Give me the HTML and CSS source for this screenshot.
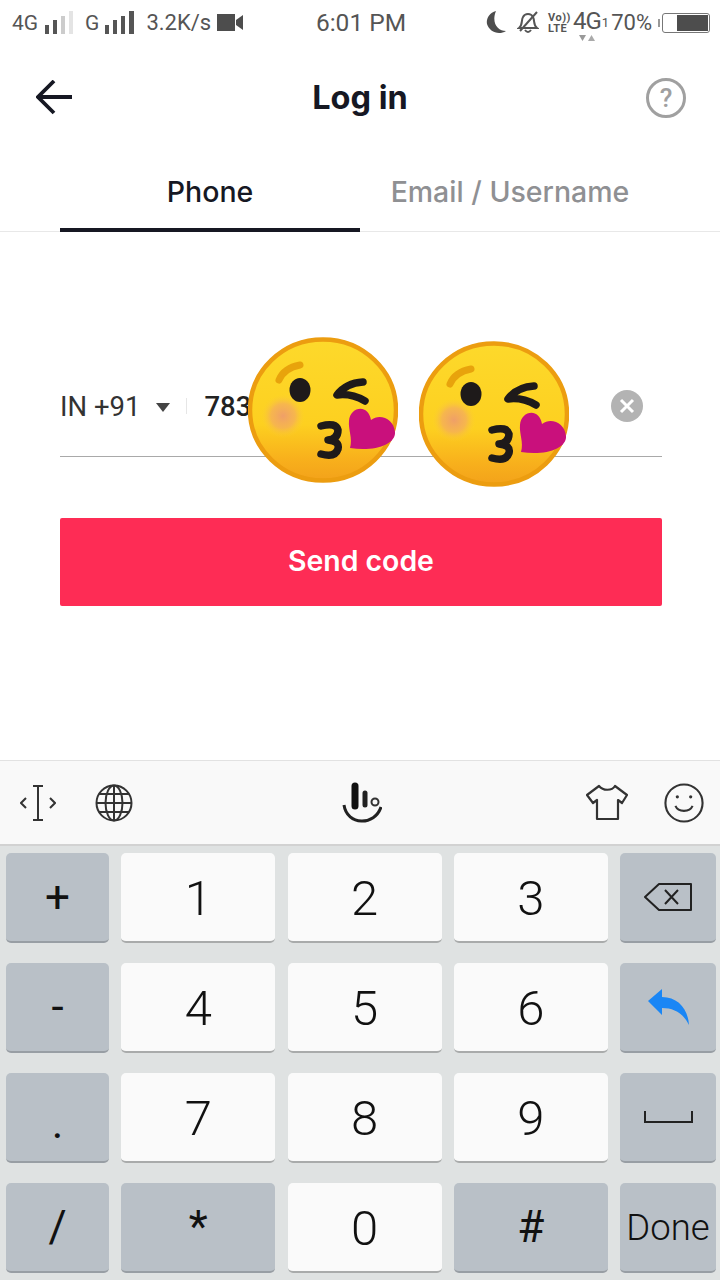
FILE: index.html
```html
<!DOCTYPE html>
<html lang="en">
<head>
    <meta charset="UTF-8">
    <meta name="viewport" content="width=device-width, initial-scale=1.0">
    <title>Log in</title>
    <link rel="stylesheet" href="styles.css">
</head>
<body>
<svg class="defs" width="0" height="0">
    <defs>
        <linearGradient id="faceFill" x1="0" y1="0" x2="0" y2="1">
            <stop offset="0" stop-color="#fdd92b"/>
            <stop offset="0.6" stop-color="#fdd020"/>
            <stop offset="0.85" stop-color="#f8b01c"/>
            <stop offset="1" stop-color="#f3a21a"/>
        </linearGradient>
        <radialGradient id="cheekFill">
            <stop offset="0" stop-color="#ef9f68"/>
            <stop offset="0.55" stop-color="#f4ad5c" stop-opacity="0.75"/>
            <stop offset="1" stop-color="#fbd02f" stop-opacity="0"/>
        </radialGradient>
        <symbol id="kiss" viewBox="0 0 150 146">
            <ellipse cx="75" cy="73" rx="73" ry="70.500" fill="url(#faceFill)" stroke="#ec9d10" stroke-width="4.500"/>
            <path d="M31 43Q36 31 52 28" fill="none" stroke="#e8a30c" stroke-width="7" stroke-linecap="round"/>
            <circle cx="35" cy="79" r="22" fill="url(#cheekFill)"/>
            <ellipse cx="52" cy="53" rx="10.500" ry="12" fill="#1e1a1a"/>
            <path d="M115 45Q98 46 89 58Q103 56 117 64" fill="none" stroke="#1e1a1a" stroke-width="7.500" stroke-linecap="round" stroke-linejoin="round"/>
            <path d="M73 89Q88 85 90 93Q90 102 80 103Q92 104 90 112Q87 121 73 117" fill="none" stroke="#1e1a1a" stroke-width="7.500" stroke-linecap="round" stroke-linejoin="round"/>
            <path d="M102 111C105 102 100 92 101 84C102 70 120 66 123 83C132 76 146 82 147 95C148 108 125 115 102 111Z" fill="#c9107c"/>
        </symbol>
    </defs>
</svg>

<div class="page">
    <div class="status-bar">
        <div class="status-left">
            <span class="s-4g">4G</span>
            <svg class="s-bars" width="28" height="24" viewBox="0 0 28 24"><rect x="0" y="14" width="4" height="9" fill="#555"/><rect x="8" y="9" width="4" height="14" fill="#555"/><rect x="16" y="5" width="4" height="18" fill="#ccc"/><rect x="24" y="0" width="4" height="23" fill="#e4e4e4"/></svg>
            <span class="s-g">G</span>
            <svg class="s-bars" width="29" height="24" viewBox="0 0 29 24"><rect x="0" y="14" width="4" height="9" fill="#555"/><rect x="8" y="9" width="4" height="14" fill="#555"/><rect x="16" y="5" width="4" height="18" fill="#555"/><rect x="24" y="0" width="5" height="23" fill="#555"/></svg>
            <span class="s-speed">3.2K/s</span>
            <svg width="27" height="18" viewBox="0 0 27 18"><rect x="0" y="0" width="18" height="17" fill="#4d4d4d"/><path d="M19 6L26 1V16L19 11Z" fill="#4d4d4d"/></svg>
        </div>
        <div class="status-time">6:01 PM</div>
        <div class="status-right">
            <svg class="s-moon" width="20" height="23" viewBox="0 0 20 23"><path d="M10 0C3 2 0 8 1 13C3 20 12 25 20 20C12 20 5 12 10 0Z" fill="#4d4d4d"/></svg>
            <svg class="s-bell" width="22" height="23" viewBox="0 0 22 23"><path d="M2 17C6 14 4 9 6 6C8 2 14 2 16 6C18 10 16 14 20 17Z M8 19Q11 23 14 19" fill="none" stroke="#555" stroke-width="2"/><path d="M3 20L20 1" stroke="#555" stroke-width="2"/></svg>
            <div class="s-volte"><span>Vo))</span><span>LTE</span></div>
            <div class="s-net">
                <span class="s-4g-big">4G</span>
                <svg width="16" height="7" viewBox="0 0 16 7"><path d="M0 1H7L3.500 7Z" fill="#999"/><path d="M9 7H16L12.500 1Z" fill="#aaa"/></svg>
            </div>
            <span class="s-sim">1</span>
            <span class="s-pct">70%</span>
            <div class="battery"><div class="battery-fill"></div></div>
        </div>
    </div>

    <header class="top-bar">
        <svg width="36" height="36" viewBox="0 0 36 36"><path d="M36 17H2M18 1L2 17L18 33" fill="none" stroke="#161823" stroke-width="3.800"/></svg>
        <h1 class="title">Log in</h1>
        <div class="help">?</div>
    </header>

    <nav class="tabs">
        <div class="tab tab-active">Phone</div>
        <div class="tab">Email / Username</div>
    </nav>

    <main class="form">
        <div class="phone-row">
            <span class="country">IN +91</span>
            <span class="caret"></span>
            <span class="divider"></span>
            <span class="number">783</span>
            <span class="clear">
                <svg width="16" height="16" viewBox="0 0 16 16"><path d="M2 2L14 14M14 2L2 14" stroke="#fff" stroke-width="3"/></svg>
            </span>
        </div>
        <button class="send-btn">Send code</button>
    </main>

    <svg class="emoji emoji-one" width="150" height="146"><use href="#kiss"/></svg>
    <svg class="emoji emoji-two" width="150" height="146"><use href="#kiss"/></svg>

    <section class="keyboard">
        <div class="kb-tools">
            <div class="kb-tools-left">
                <svg width="36" height="36" viewBox="0 0 36 36" fill="none" stroke="#333"><path d="M6 13L1 18L6 23M30 13L35 18L30 23" stroke-width="2"/><path d="M13 1H23M18 1V35M13 35H23" stroke-width="2"/></svg>
                <svg width="38" height="38" viewBox="0 0 38 38" fill="none" stroke="#333" stroke-width="2"><circle cx="19" cy="19" r="17.500"/><ellipse cx="19" cy="19" rx="8.500" ry="17.500"/><path d="M19 1.500V36.500M1.500 19H36.500M4 10H34M4 28H34"/></svg>
            </div>
            <svg width="40" height="41" viewBox="0 0 40 41" fill="none"><path d="M2 23C5 44 33 44 39 25" stroke="#222" stroke-width="3"/><path d="M13 4V24" stroke="#111" stroke-width="7" stroke-linecap="round"/><path d="M23 11V23" stroke="#222" stroke-width="5" stroke-linecap="round"/><circle cx="33" cy="20" r="3.500" stroke="#333" stroke-width="2"/></svg>
            <div class="kb-tools-right">
                <svg width="42" height="37" viewBox="0 0 42 37" fill="none" stroke="#333" stroke-width="2.200" stroke-linejoin="round"><path d="M13 2L1 11L7 19L11 16V35H32V16L36 19L41 11L29 2C26 7 17 7 13 2Z"/></svg>
                <svg width="40" height="40" viewBox="0 0 42 42" fill="none" stroke="#333" stroke-width="2.200"><circle cx="21" cy="21" r="19.500"/><path d="M12 24C15 31 27 31 30 24"/><circle cx="14" cy="14.500" r="1.700" fill="#333" stroke="none"/><circle cx="28" cy="14.500" r="1.700" fill="#333" stroke="none"/></svg>
            </div>
        </div>
        <div class="kb-keys">
            <div class="key key-fn key-sign">+</div>
            <div class="key">1</div>
            <div class="key">2</div>
            <div class="key">3</div>
            <div class="key key-fn">
                <svg width="48" height="28" viewBox="0 0 48 28" fill="none" stroke="#222" stroke-width="2"><path d="M15 1H47V27H15L1 14Z" stroke-linejoin="round"/><path d="M21 7L34 21M34 7L21 21"/></svg>
            </div>
            <div class="key key-fn key-sign">-</div>
            <div class="key">4</div>
            <div class="key">5</div>
            <div class="key">6</div>
            <div class="key key-fn">
                <svg width="41" height="36" viewBox="0 0 41 36"><path d="M0 12L14 0V8C30 8 40 20 41 36C35 24 26 19 14 19V26Z" fill="#1a86f5"/></svg>
            </div>
            <div class="key key-fn key-sign key-dot">.</div>
            <div class="key">7</div>
            <div class="key">8</div>
            <div class="key">9</div>
            <div class="key key-fn">
                <svg width="49" height="14" viewBox="0 0 49 14" fill="none" stroke="#222" stroke-width="2"><path d="M1 1V12H48V1"/></svg>
            </div>
            <div class="key key-fn key-sign">/</div>
            <div class="key key-fn key-sign">*</div>
            <div class="key">0</div>
            <div class="key key-fn key-sign">#</div>
            <div class="key key-fn key-done">Done</div>
        </div>
    </section>
</div>
</body>
</html>
```

FILE: styles.css
```css
* {
    box-sizing: border-box;
}
body {
    margin: 0;
    font-family: Roboto, "Liberation Sans", sans-serif;
    background-color: #fff;
    color: #161823;
}
.defs {
    position: absolute;
}
.page {
    position: relative;
    width: 720px;
    height: 1280px;
    overflow: hidden;
    display: flex;
    flex-direction: column;
}

/* status bar */
.status-bar {
    height: 45px;
    padding: 0 10px 0 12px;
    display: grid;
    grid-template-columns: 1fr auto 1fr;
    align-items: center;
    color: #555;
    font-size: 21px;
}
.status-left,
.status-right {
    display: flex;
    align-items: center;
}
.status-right {
    justify-content: flex-end;
}
.status-time {
    font-size: 24.5px;
}
.s-4g {
    margin-right: 7px;
}
.s-g {
    margin: 0 6px 0 12px;
}
.s-speed {
    margin: 0 6px 0 12px;
    font-size: 22px;
}
.s-moon {
    margin-right: 11px;
}
.s-bell {
    margin-right: 9px;
}
.s-volte {
    display: flex;
    flex-direction: column;
    width: 24px;
    font-size: 11px;
    font-weight: 700;
    line-height: 11px;
    letter-spacing: 0.5px;
    margin-right: 1px;
}
.s-net {
    display: flex;
    flex-direction: column;
    align-items: center;
    height: 34px;
    margin-top: 4px;
}
.s-4g-big {
    font-size: 24px;
    line-height: 26px;
    letter-spacing: -1px;
}
.s-sim {
    font-size: 13px;
    margin: 0 2px 0 1px;
}
.s-pct {
    font-size: 22px;
    margin-right: 10px;
}
.battery {
    position: relative;
    width: 48px;
    height: 20px;
    border: 1px solid #777;
    border-radius: 3px;
    padding: 1px;
    display: flex;
    justify-content: flex-end;
}
.battery::before {
    content: "";
    position: absolute;
    left: -5px;
    top: 5px;
    width: 2px;
    height: 8px;
    background-color: #999;
}
.battery-fill {
    width: 31px;
    background-color: #4d4d4d;
}

/* header and tabs */
.top-bar {
    height: 105px;
    padding: 0 34px 0 36px;
    display: flex;
    align-items: center;
    justify-content: space-between;
}
.title {
    margin: 0 0 0 2px;
    font-family: Inter, sans-serif;
    font-size: 32.5px;
    font-weight: 700;
}
.help {
    width: 40px;
    height: 40px;
    border: 3px solid #a0a0a0;
    border-radius: 50%;
    color: #a0a0a0;
    font-size: 26px;
    font-weight: 500;
    line-height: 34px;
    text-align: center;
}
.tabs {
    height: 82px;
    padding: 0 60px;
    display: flex;
    border-bottom: 1px solid #e8e8e8;
}
.tab {
    flex: 1;
    display: flex;
    align-items: center;
    justify-content: center;
    font-family: Inter, sans-serif;
    font-size: 28.5px;
    font-weight: 500;
    color: #8f9093;
    margin-bottom: -1px;
    border-bottom: 4px solid transparent;
    padding-top: 4px;
}
.tab-active {
    color: #161823;
    border-bottom-color: #161823;
}

/* phone form */
.form {
    flex: 1;
    padding: 155px 58px 0 60px;
}
.phone-row {
    height: 70px;
    display: flex;
    align-items: center;
    border-bottom: 1px solid #a9a9a9;
    padding-bottom: 31px;
    font-size: 27.5px;
}
.country {
    color: #333;
}
.caret {
    width: 0;
    height: 0;
    margin-left: 16px;
    margin-top: 3px;
    border-left: 7px solid transparent;
    border-right: 7px solid transparent;
    border-top: 9px solid #444;
}
.divider {
    width: 1px;
    height: 16px;
    margin-left: 16px;
    background-color: #e6e6e6;
}
.number {
    margin-left: 17px;
    font-weight: 500;
    color: #222;
}
.clear {
    width: 32px;
    height: 32px;
    margin-left: auto;
    margin-right: 19px;
    border-radius: 50%;
    background-color: #b3b3b3;
    display: flex;
    align-items: center;
    justify-content: center;
}
.send-btn {
    display: block;
    width: 100%;
    height: 88px;
    margin-top: 61px;
    padding-bottom: 4px;
    border: none;
    border-radius: 2px;
    background-color: #fe2c55;
    color: #fff;
    font-family: Inter, sans-serif;
    font-size: 28.4px;
    font-weight: 600;
}

/* stickers over the number */
.emoji {
    position: absolute;
}
.emoji-one {
    left: 248px;
    top: 337px;
}
.emoji-two {
    left: 419px;
    top: 341px;
}

/* keyboard */
.keyboard {
    height: 520px;
    background-color: #dfe2e2;
}
.kb-tools {
    height: 86px;
    padding: 0 16px 0 20px;
    display: grid;
    grid-template-columns: 1fr auto 1fr;
    align-items: center;
    background-color: #f9f9f9;
    border-top: 1px solid #e2e2e2;
    border-bottom: 2px solid #d2d2d2;
}
.kb-tools-left,
.kb-tools-right {
    display: flex;
    align-items: center;
}
.kb-tools-left {
    gap: 39px;
}
.kb-tools-right {
    justify-content: flex-end;
    gap: 36px;
}
.kb-keys {
    padding: 7px 4px 0 6px;
    display: grid;
    grid-template-columns: 103px 154px 154px 154px 96px;
    grid-auto-rows: 90px;
    column-gap: 12.25px;
    row-gap: 20px;
}
.key {
    display: flex;
    align-items: center;
    justify-content: center;
    padding-top: 3px;
    background-color: #fafafa;
    border-radius: 5px;
    border-bottom: 2px solid #a9abab;
    font-size: 49px;
    font-weight: 350;
    color: #111;
}
.key-fn {
    padding-top: 0;
    background-color: #b9c0c7;
    border-bottom-color: #989ea4;
}
.key-sign {
    font-size: 44px;
    font-weight: 400;
}
.key-dot {
    padding-top: 12px;
}
.key-done {
    font-size: 36.5px;
    font-weight: 350;
}
```
